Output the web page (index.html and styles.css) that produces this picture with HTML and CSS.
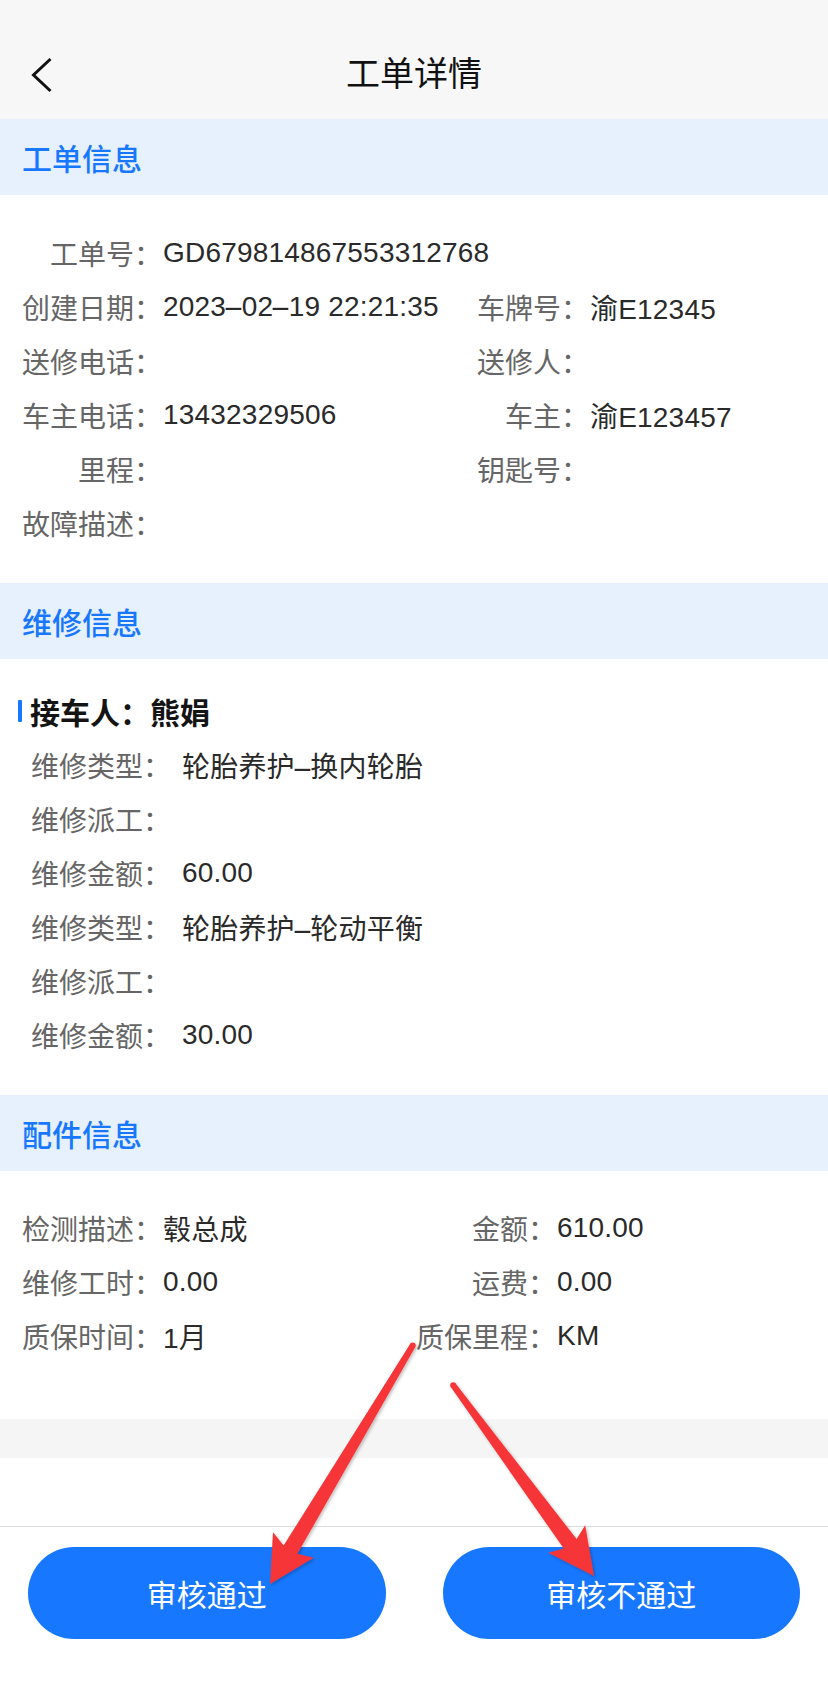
FILE: index.html
```html
<!DOCTYPE html>
<html lang="zh-CN">
<head>
<meta charset="utf-8">
<title>工单详情</title>
<link rel="stylesheet" href="styles.css">
</head>
<body>
<div class="page">
  <header class="nav">
    <div class="nav-left">
      <svg class="back" width="22" height="36" viewBox="0 0 22 36"><polyline points="19.5,2 2.5,18 19.5,34" fill="none" stroke="#111" stroke-width="3" stroke-linejoin="miter"/></svg>
    </div>
    <h1 class="nav-title">工单详情</h1>
    <div class="nav-right"></div>
  </header>

  <section class="panel">
    <div class="panel-head">工单信息</div>
    <div class="panel-body grid-a">
      <div class="field span-all"><span class="label">工单号：</span><span class="value">GD679814867553312768</span></div>
      <div class="field"><span class="label">创建日期：</span><span class="value">2023<span class="hy">-</span>02<span class="hy">-</span>19 22:21:35</span></div>
      <div class="field"><span class="label">车牌号：</span><span class="value">渝E12345</span></div>
      <div class="field"><span class="label">送修电话：</span><span class="value"></span></div>
      <div class="field"><span class="label">送修人：</span><span class="value"></span></div>
      <div class="field"><span class="label">车主电话：</span><span class="value">13432329506</span></div>
      <div class="field"><span class="label">车主：</span><span class="value">渝E123457</span></div>
      <div class="field"><span class="label">里程：</span><span class="value"></span></div>
      <div class="field"><span class="label">钥匙号：</span><span class="value"></span></div>
      <div class="field"><span class="label">故障描述：</span><span class="value"></span></div>
    </div>
  </section>

  <section class="panel">
    <div class="panel-head">维修信息</div>
    <div class="panel-body repair">
      <div class="receiver"><span class="bar"></span>接车人：熊娟</div>
      <div class="rrow"><span class="rlabel">维修类型：</span><span class="value">轮胎养护<span class="hy">-</span>换内轮胎</span></div>
      <div class="rrow"><span class="rlabel">维修派工：</span><span class="value"></span></div>
      <div class="rrow"><span class="rlabel">维修金额：</span><span class="value">60.00</span></div>
      <div class="rrow"><span class="rlabel">维修类型：</span><span class="value">轮胎养护<span class="hy">-</span>轮动平衡</span></div>
      <div class="rrow"><span class="rlabel">维修派工：</span><span class="value"></span></div>
      <div class="rrow"><span class="rlabel">维修金额：</span><span class="value">30.00</span></div>
    </div>
  </section>

  <section class="panel">
    <div class="panel-head">配件信息</div>
    <div class="panel-body grid-b">
      <div class="field"><span class="label">检测描述：</span><span class="value">毂总成</span></div>
      <div class="field"><span class="label">金额：</span><span class="value">610.00</span></div>
      <div class="field"><span class="label">维修工时：</span><span class="value">0.00</span></div>
      <div class="field"><span class="label">运费：</span><span class="value">0.00</span></div>
      <div class="field"><span class="label">质保时间：</span><span class="value">1月</span></div>
      <div class="field"><span class="label">质保里程：</span><span class="value">KM</span></div>
    </div>
  </section>

  <div class="gray-band"></div>
  <div class="spacer"></div>

  <footer class="actions">
    <button class="btn">审核通过</button>
    <button class="btn">审核不通过</button>
  </footer>

  <svg class="annot" width="828" height="1684" viewBox="0 0 828 1684">
    <defs>
      <filter id="sh" x="-20%" y="-20%" width="140%" height="140%">
        <feDropShadow dx="1.5" dy="1.5" stdDeviation="1.5" flood-color="#000" flood-opacity="0.25"/>
      </filter>
    </defs>
    <g fill="#f53638" filter="url(#sh)">
      <polygon points="270,1584 273,1532.2 283.6,1545.6 410.1,1344 415.3,1347 297.4,1553.8 313.7,1557.7"/>
      <circle cx="412.7" cy="1345.5" r="3"/>
      <polygon points="594,1576 585.2,1525.3 576.6,1539.1 455.6,1383.5 450.8,1387.1 563.8,1548.6 548.2,1552.7"/>
      <circle cx="453.2" cy="1385.3" r="3"/>
    </g>
  </svg>
</div>
</body>
</html>
```

FILE: styles.css
```css
* { box-sizing: border-box; }
html, body { margin: 0; padding: 0; background: #fff; }
body {
  font-family: "Liberation Sans", "Noto Sans CJK SC", sans-serif;
  color: #2a2a2a;
}
.page {
  position: relative;
  width: 828px;
  min-height: 1684px;
  background: #fff;
}

/* nav */
.nav {
  height: 119px;
  padding-top: 30px;
  background: #f7f7f7;
  display: grid;
  grid-template-columns: 1fr auto 1fr;
  align-items: center;
}
.nav-left { padding-left: 31px; display: flex; align-items: center; }
.back { display: block; }
.nav-title {
  margin: 0;
  font-size: 34px;
  font-weight: 400;
  color: #111;
  line-height: 89px;
}

/* panels */
.panel-head {
  height: 76px;
  background: #e7f1fe;
  color: #1778ff;
  font-size: 30px;
  font-weight: 500;
  padding-left: 22px;
  display: flex;
  align-items: center;
}
.panel-body { font-size: 28px; }

.field {
  display: flex;
  align-items: center;
  height: 54px;
  white-space: nowrap;
}
.label {
  width: 140px;
  flex: none;
  text-align: right;
  color: #666;
}
.value { color: #2a2a2a; padding-left: 1px; letter-spacing: 0.2px; }
.hy {
  display: inline-block;
  transform: scaleX(2.3);
  margin: 0 3px;
}

.grid-a {
  display: grid;
  grid-template-columns: 427px 1fr;
  padding: 31px 0 33px 22px;
}
.grid-b {
  display: grid;
  grid-template-columns: 394px 1fr;
  padding: 30px 0 56px 22px;
}
.span-all { grid-column: 1 / -1; }

/* repair */
.repair { padding: 25px 0 33px 18px; }
.receiver {
  height: 54px;
  display: flex;
  align-items: center;
  font-size: 30px;
  font-weight: 700;
  color: #141414;
}
.bar {
  width: 4px;
  height: 22px;
  background: #1778ff;
  border-radius: 1px;
  margin-right: 8px;
}
.rrow {
  height: 54px;
  display: flex;
  align-items: center;
  padding-left: 13px;
}
.rlabel { width: 150px; flex: none; color: #666; }

.gray-band { height: 39px; background: #f5f5f5; }
.spacer { height: 68px; }

/* footer */
.actions {
  border-top: 1px solid #dcdcdc;
  display: flex;
  gap: 57px;
  padding: 20px 28px 45px;
}
.btn {
  flex: 1;
  height: 92px;
  border: none;
  border-radius: 46px;
  background: #1778ff;
  color: #fff;
  font-family: "Liberation Sans", "Noto Sans CJK SC", sans-serif;
  font-size: 30px;
  font-weight: 400;
  padding: 0;
}

.annot {
  position: absolute;
  top: 0;
  left: 0;
  pointer-events: none;
}
```
